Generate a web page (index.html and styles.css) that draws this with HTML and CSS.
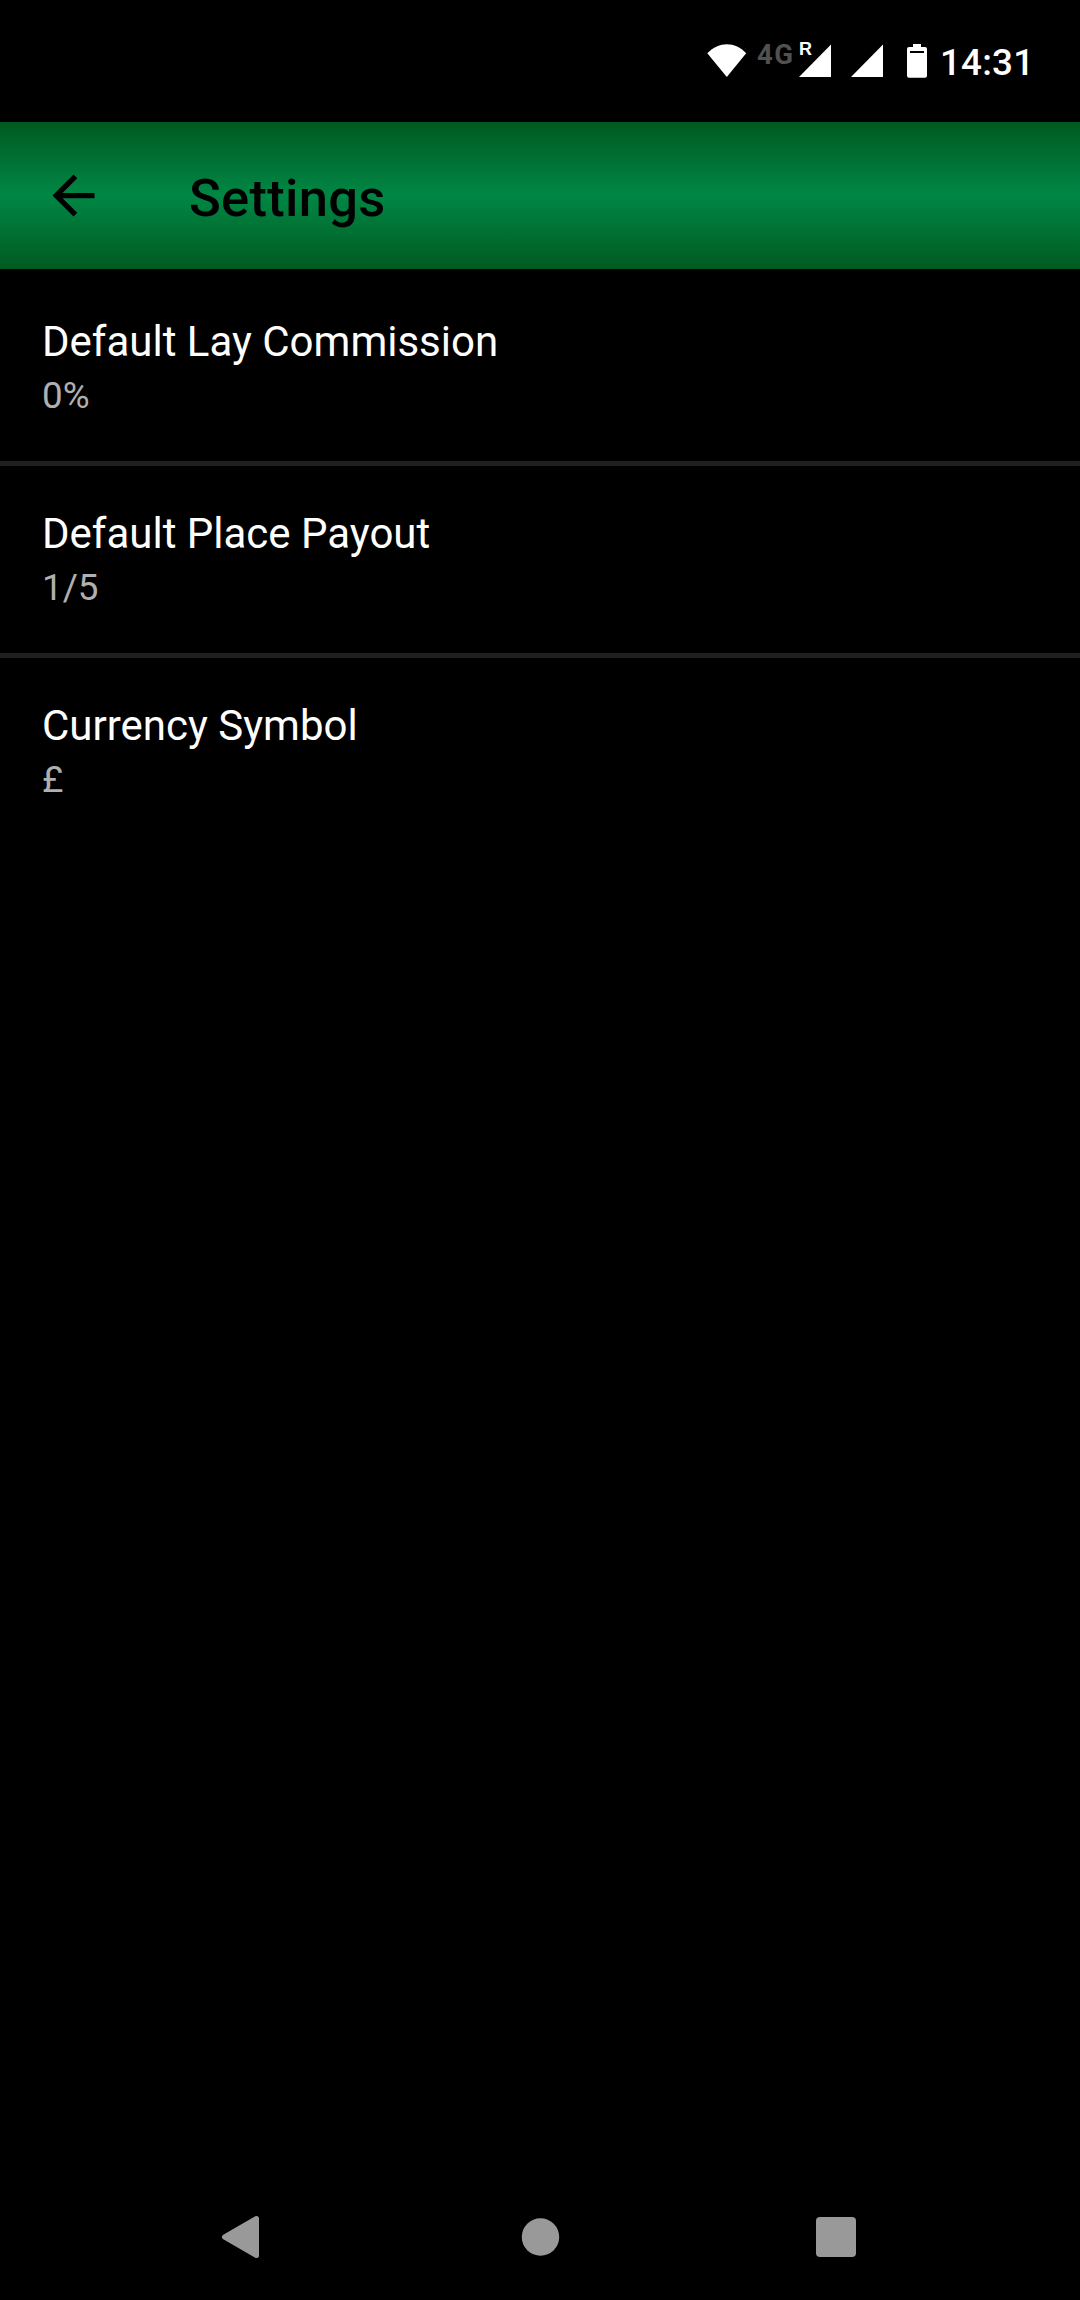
FILE: index.html
```
<!DOCTYPE html>
<html lang="en">

<head>
    <meta charset="UTF-8">
    <meta name="viewport" content="width=device-width, initial-scale=1.0">
    <title>Settings</title>
    <link rel="stylesheet" href="styles.css">
</head>

<body>
    <div class="status-bar">
        <svg class="wifi" width="40" height="34" viewBox="0 0 40 34">
            <path d="M0.3 9.3 C12 -2.8 28 -2.8 39.2 9.3 L19.8 33 Z" />
        </svg>
        <span class="network">4G</span>
        <div class="signal roaming">
            <span class="roaming-label">R</span>
            <svg width="33" height="33" viewBox="0 0 33 33">
                <path d="M0 33 L32 0.5 V33 Z" />
            </svg>
        </div>
        <div class="signal">
            <svg width="33" height="33" viewBox="0 0 33 33">
                <path d="M0 33 L32 0.5 V33 Z" />
            </svg>
        </div>
        <svg class="battery" width="20" height="34" viewBox="0 0 20 34">
            <path fill-rule="evenodd" d="M6 0 H14 V3 H18 Q20 3 20 5 V31.7 Q20 33.7 18 33.7 H2 Q0 33.7 0 31.7 V5 Q0 3 2 3 H6 Z M3 7 V9 H17 V7 Z" />
        </svg>
        <span class="time">14:31</span>
    </div>

    <header class="toolbar">
        <svg class="back" width="63" height="63" viewBox="0 0 24 24">
            <path d="M20 11H7.83l5.59-5.59L12 4l-8 8 8 8 1.41-1.41L7.83 13H20v-2z" />
        </svg>
        <h1>Settings</h1>
    </header>

    <main class="settings">
        <div class="setting">
            <div class="name">Default Lay Commission</div>
            <div class="value">0%</div>
        </div>
        <div class="setting">
            <div class="name">Default Place Payout</div>
            <div class="value">1/5</div>
        </div>
        <div class="setting">
            <div class="name">Currency Symbol</div>
            <div class="value">£</div>
        </div>
    </main>

    <nav class="nav-bar">
        <svg width="42" height="44" viewBox="0 0 42 44">
            <path d="M4.5 22 L36.5 3.5 V40.5 Z" stroke="#999" stroke-width="5" stroke-linejoin="round" />
        </svg>
        <svg width="42" height="44" viewBox="0 0 42 44">
            <circle cx="22.5" cy="22" r="18.7" />
        </svg>
        <svg width="42" height="44" viewBox="0 0 42 44">
            <rect x="1" y="2" width="40" height="40" rx="4" />
        </svg>
    </nav>
</body>

</html>
```

FILE: styles.css
```
* {
    box-sizing: border-box;
}

body {
    margin: 0;
    height: 2300px;
    display: flex;
    flex-direction: column;
    background-color: #000;
    color: #fff;
    font-family: Roboto, sans-serif;
}

svg {
    display: block;
    flex: none;
}

.status-bar {
    display: flex;
    align-items: flex-start;
    height: 122px;
    padding: 44px 0 0 707px;
    fill: #fff;
}

.network {
    width: 42px;
    margin: -3px 0 0 10px;
    color: #515151;
    font-size: 27.5px;
    font-weight: 700;
    letter-spacing: 1.5px;
    line-height: 28px;
}

.signal {
    position: relative;
    width: 33px;
    margin-right: 23px;
}

.roaming {
    margin-right: 19px;
}

.roaming-label {
    position: absolute;
    top: -4px;
    left: 0;
    font-family: "Liberation Sans", Arial, sans-serif;
    font-size: 18px;
    font-weight: 700;
    line-height: 18px;
}

.time {
    margin: -1px 0 0 13px;
    font-size: 36.75px;
    font-weight: 500;
    letter-spacing: 0.2px;
    line-height: 40px;
}

.toolbar {
    display: flex;
    align-items: center;
    height: 147px;
    padding-left: 42px;
    background: linear-gradient(#005a20, #008745 50%, #005a20);
    color: #000;
}

.toolbar h1 {
    margin: 4px 0 0 84px;
    font-size: 52.5px;
    font-weight: 500;
    letter-spacing: 0.3px;
    line-height: 62px;
}

.settings {
    flex: 1;
    padding-top: 5px;
}

.setting {
    height: 192px;
    padding: 43px 42px 0;
    border-bottom: 5px solid #202020;
}

.setting:last-child {
    border-bottom: none;
}

.name {
    font-size: 42px;
    line-height: 50px;
}

.value {
    margin-top: 7px;
    color: #b0b0b0;
    font-size: 36.75px;
    line-height: 44px;
}

.nav-bar {
    display: flex;
    justify-content: space-between;
    align-items: center;
    height: 126px;
    padding: 0 223px 0 220px;
    fill: #999;
}
```
